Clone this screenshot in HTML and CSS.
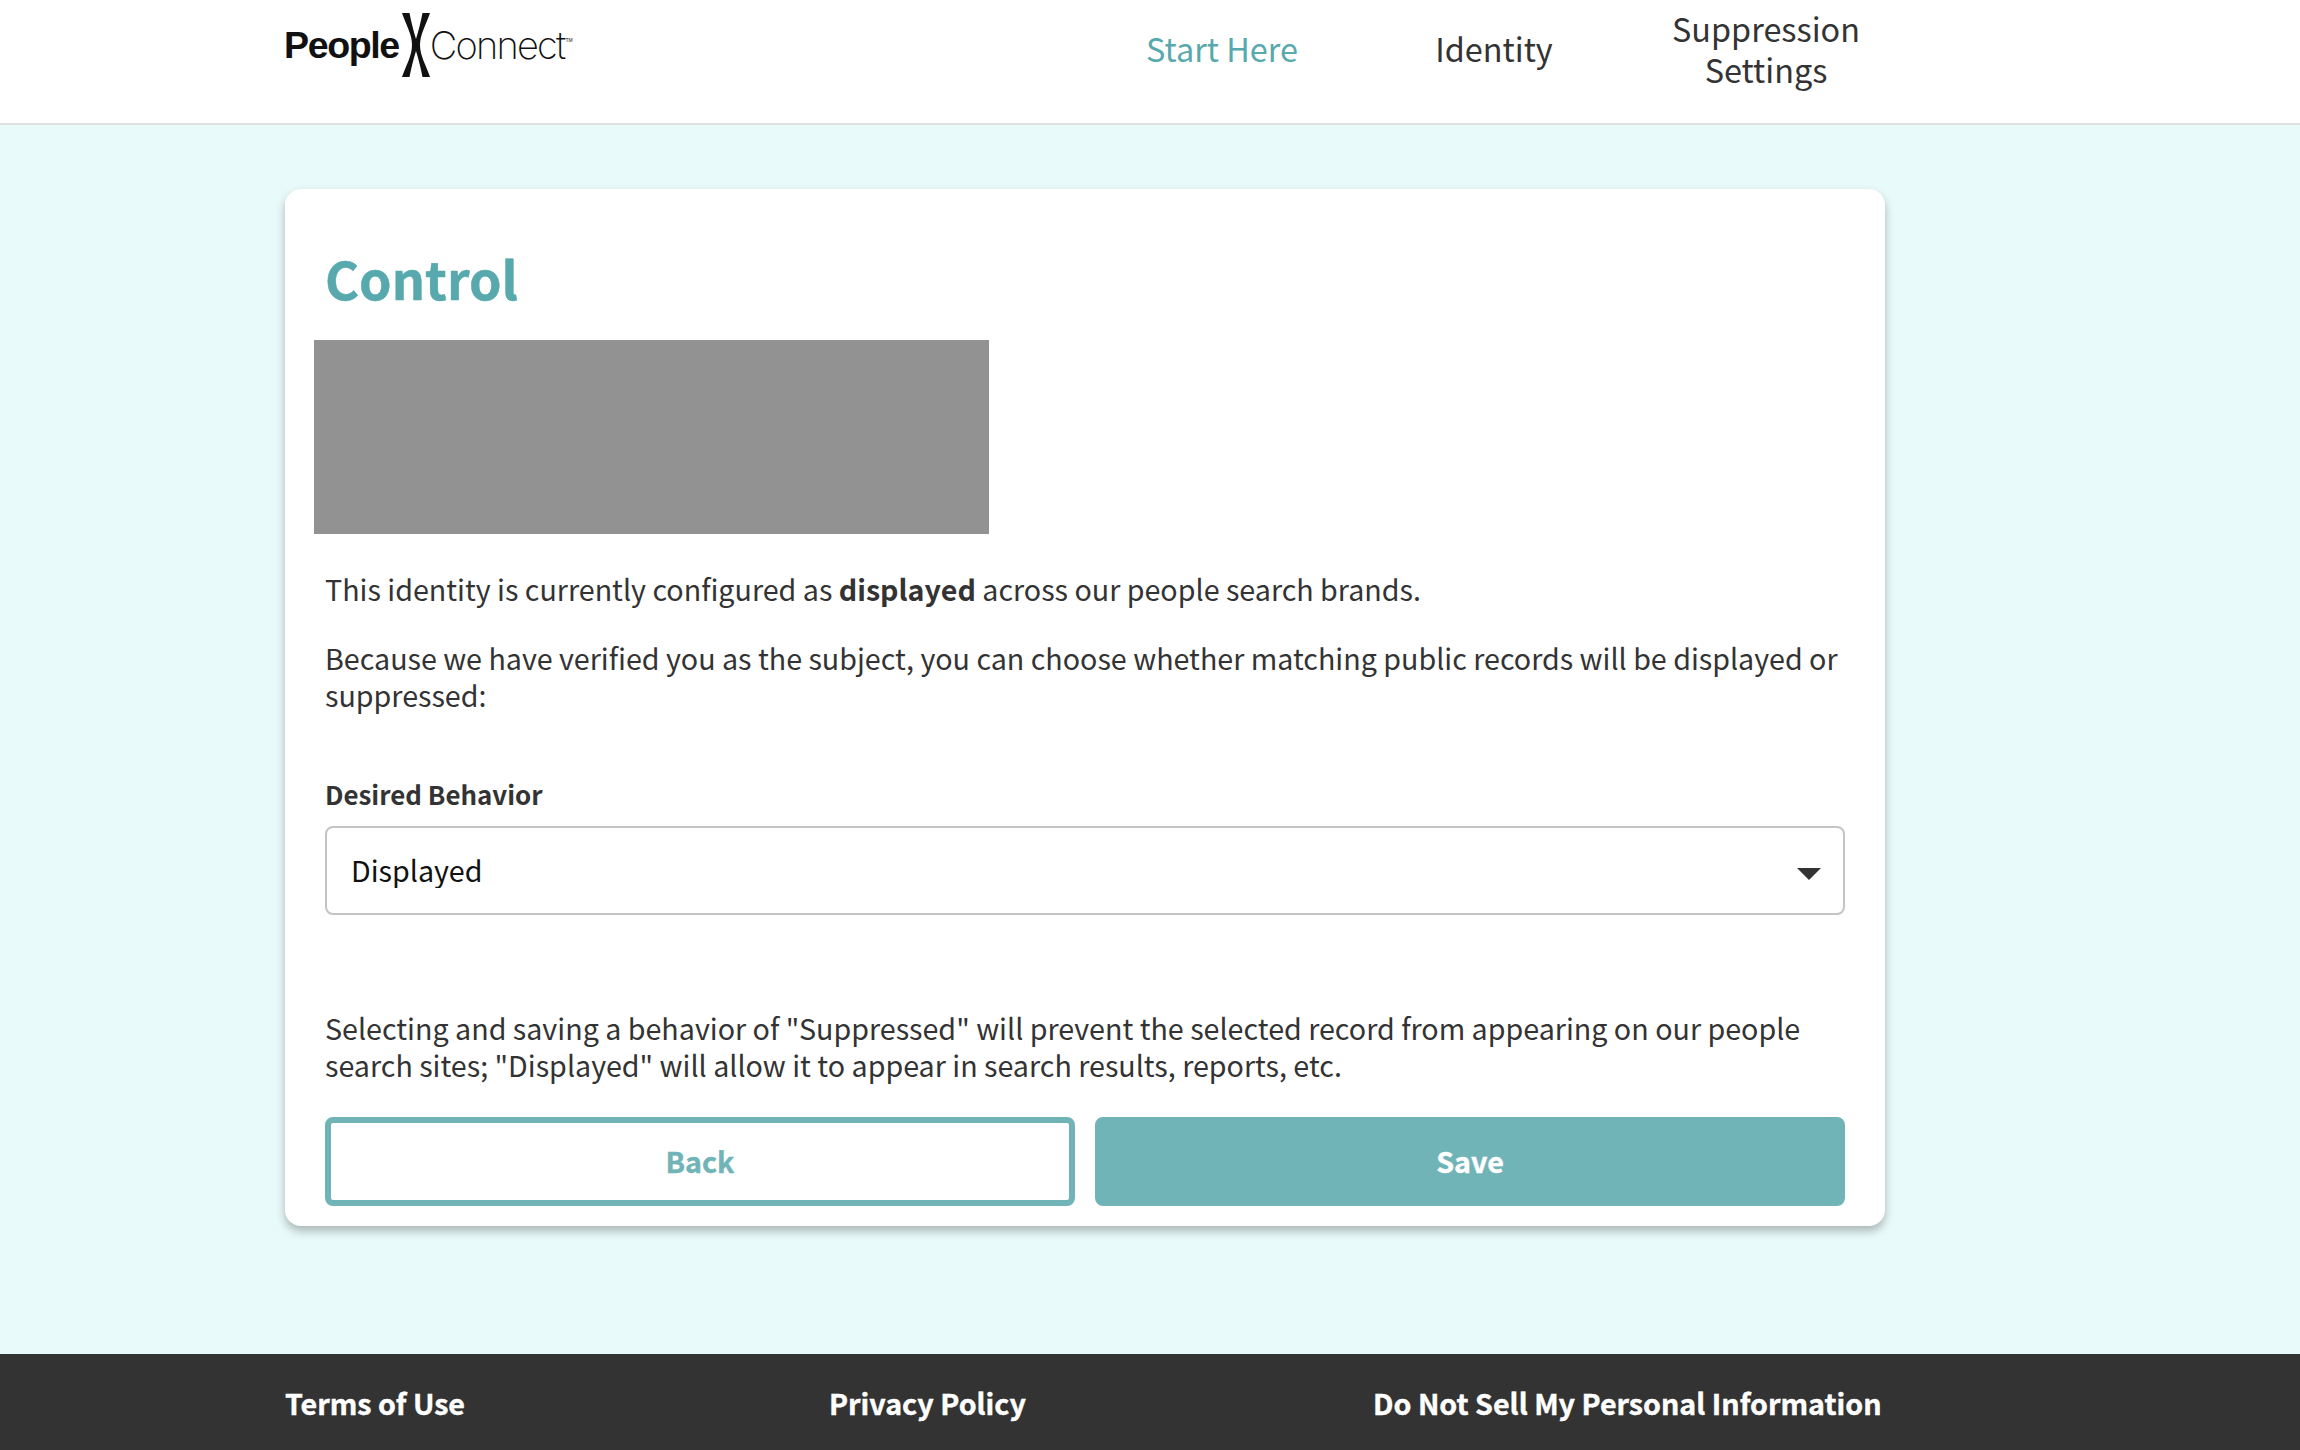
FILE: index.html
```html
<!DOCTYPE html>
<html lang="en">
<head>
    <meta charset="UTF-8">
    <meta name="viewport" content="width=device-width, initial-scale=1.0">
    <title>PeopleConnect - Control</title>
    <link rel="stylesheet" href="styles.css">
</head>
<body>
    <header class="site-header">
        <a class="logo" href="#">
            <span class="logo-people">People</span>
            <svg class="logo-x" width="28" height="64" viewBox="0 0 28 64">
                <path d="M0 0H7.500C9.500 10 11.500 18 14 26C16.500 18 18.500 10 20.500 0H28C24 12 18 21 18 32C18 43 24 52 28 64H20.500C18.500 54 16.500 46 14 38C11.500 46 9.500 54 7.500 64H0C4 52 10 43 10 32C10 21 4 12 0 0Z" fill="#111"/>
            </svg>
            <span class="logo-connect">Connect</span>
            <span class="logo-tm">TM</span>
        </a>
        <nav class="main-nav">
            <a class="nav-link active" href="#">Start Here</a>
            <a class="nav-link" href="#">Identity</a>
            <a class="nav-link" href="#">Suppression Settings</a>
        </nav>
    </header>

    <main class="content">
        <section class="card">
            <h1 class="card-title">Control</h1>
            <div class="redacted"></div>
            <p class="status-text">This identity is currently configured as <b>displayed</b> across our people search brands.</p>
            <p class="choice-text">Because we have verified you as the subject, you can choose whether matching public records will be displayed or suppressed:</p>
            <label class="field-label" for="behavior">Desired Behavior</label>
            <div class="select-wrap">
                <select class="select" id="behavior">
                    <option>Displayed</option>
                    <option>Suppressed</option>
                </select>
            </div>
            <p class="help-text">Selecting and saving a behavior of "Suppressed" will prevent the selected record from appearing on our people search sites; "Displayed" will allow it to appear in search results, reports, etc.</p>
            <div class="actions">
                <button class="btn btn-outline" type="button">Back</button>
                <button class="btn btn-solid" type="button">Save</button>
            </div>
        </section>
    </main>

    <footer class="site-footer">
        <a class="footer-link" href="#">Terms of Use</a>
        <a class="footer-link" href="#">Privacy Policy</a>
        <a class="footer-link" href="#">Do Not Sell My Personal Information</a>
    </footer>
</body>
</html>
```

FILE: styles.css
```css
* {
    box-sizing: border-box;
}

body {
    margin: 0;
    height: 1450px;
    display: flex;
    flex-direction: column;
    background: #e9fafa;
    color: #333;
    font-family: 'Noto Sans CJK JP', 'Open Sans', sans-serif;
    font-size: 28.66px;
    line-height: 37px;
}

a {
    text-decoration: none;
}

/* header */
.site-header {
    height: 125px;
    flex-shrink: 0;
    display: flex;
    justify-content: space-between;
    background: #fff;
    border-bottom: 2px solid #e0e0e0;
    padding-left: 284px;
    padding-right: 398px;
}

.logo {
    display: flex;
    align-items: flex-start;
    color: #111;
    height: 90px;
}

.logo-people {
    font-family: 'Liberation Sans', sans-serif;
    font-weight: bold;
    font-size: 37.6px;
    letter-spacing: -1.4px;
    line-height: 42px;
    margin-top: 24px;
}

.logo-x {
    margin: 13px 0 0 3px;
}

.logo-connect {
    font-family: 'Inter', sans-serif;
    font-weight: 200;
    font-size: 38px;
    letter-spacing: -1.8px;
    line-height: 44px;
    margin-top: 23px;
}

.logo-tm {
    font-family: 'Liberation Sans', sans-serif;
    font-size: 5px;
    line-height: 6px;
    margin: 37px 0 0 1px;
}

.main-nav {
    display: flex;
    align-items: center;
    height: 95px;
}

.nav-link {
    width: 272px;
    text-align: center;
    color: #333;
    font-size: 32.4px;
    line-height: 41px;
}

.nav-link.active {
    color: #58a9ad;
}

/* card */
.content {
    flex: 1;
    padding: 64px 0 0 285px;
}

.card {
    width: 1600px;
    height: 1037px;
    padding: 0 40px;
    background: #fff;
    border-radius: 16px;
    box-shadow: 0 5px 10px rgba(0, 0, 0, 0.28);
    display: flow-root;
}

.card-title {
    margin: 57px 0 0;
    color: #58a9ad;
    font-size: 52px;
    font-weight: bold;
    line-height: 64px;
    -webkit-text-stroke: 0.5px #58a9ad;
}

.redacted {
    width: 675px;
    height: 194px;
    margin: 30px 0 0 -11px;
    background: #929292;
}

.status-text {
    margin: 36px 0 0;
}

.choice-text {
    margin: 32px 0 0;
}

.field-label {
    display: block;
    margin-top: 63px;
    font-size: 25.9px;
    font-weight: bold;
    line-height: 36px;
}

.select-wrap {
    position: relative;
    margin-top: 14px;
}

.select-wrap::after {
    content: '';
    position: absolute;
    right: 24px;
    top: 42px;
    border-style: solid;
    border-width: 12px 12px 0 12px;
    border-color: #333 transparent transparent transparent;
    pointer-events: none;
}

.select {
    display: block;
    width: 100%;
    height: 89px;
    padding: 0 24px 3px;
    appearance: none;
    background: #fff;
    border: 2px solid #c4c4c4;
    border-radius: 8px;
    color: #111;
    font: inherit;
}

.help-text {
    margin: 94px 0 0;
}

.actions {
    display: grid;
    grid-template-columns: 1fr 1fr;
    gap: 20px;
    margin-top: 34px;
}

.btn {
    height: 89px;
    padding-bottom: 4px;
    border-radius: 8px;
    border: 6px solid #70b4b8;
    font-family: inherit;
    font-size: 28.66px;
    font-weight: bold;
    -webkit-text-stroke: 0.4px;
}

.btn-outline {
    background: #fff;
    color: #70b4b8;
}

.btn-solid {
    background: #70b4b8;
    color: #fff;
}

/* footer */
.site-footer {
    height: 96px;
    flex-shrink: 0;
    display: grid;
    grid-template-columns: 544px 544px 1fr;
    align-items: center;
    padding-left: 285px;
    background: #333;
}

.footer-link {
    color: #fff;
    font-weight: bold;
    font-size: 28.66px;
    -webkit-text-stroke: 0.4px #fff;
}
```
